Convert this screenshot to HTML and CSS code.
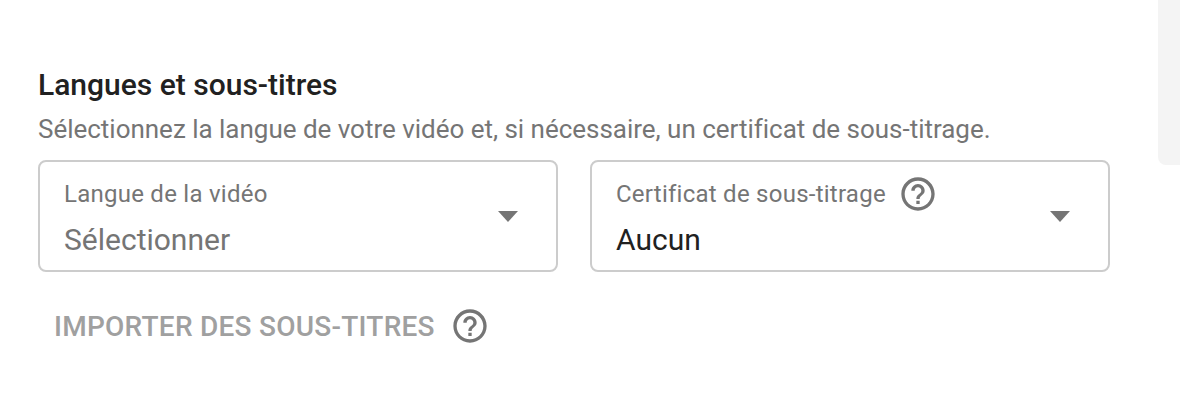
FILE: index.html
```html
<!DOCTYPE html>
<html lang="fr">
<head>
    <meta charset="UTF-8">
    <meta name="viewport" content="width=device-width, initial-scale=1.0">
    <title>Langues et sous-titres</title>
    <link rel="stylesheet" href="styles.css">
</head>
<body>
    <main class="section">
        <h2 class="section-title">Langues et sous-titres</h2>
        <p class="section-desc">Sélectionnez la langue de votre vidéo et, si nécessaire, un certificat de sous-titrage.</p>

        <div class="select-row">
            <div class="select-box">
                <div class="select-text">
                    <div class="select-label">Langue de la vidéo</div>
                    <div class="select-value placeholder">Sélectionner</div>
                </div>
                <span class="select-arrow"></span>
            </div>
            <div class="select-box">
                <div class="select-text">
                    <div class="select-label">
                        Certificat de sous-titrage
                        <svg class="help-icon" viewBox="0 0 24 24"><path d="M11 18h2v-2h-2v2zm1-16C6.48 2 2 6.48 2 12s4.48 10 10 10 10-4.48 10-10S17.52 2 12 2zm0 18c-4.41 0-8-3.59-8-8s3.59-8 8-8 8 3.59 8 8-3.59 8-8 8zm0-14c-2.21 0-4 1.79-4 4h2c0-1.1.9-2 2-2s2 .9 2 2c0 2-3 1.75-3 5h2c0-2.25 3-2.5 3-5 0-2.21-1.79-4-4-4z"/></svg>
                    </div>
                    <div class="select-value">Aucun</div>
                </div>
                <span class="select-arrow"></span>
            </div>
        </div>

        <div class="upload-row">
            <span class="upload-label">IMPORTER DES SOUS-TITRES</span>
            <svg class="help-icon" viewBox="0 0 24 24"><path d="M11 18h2v-2h-2v2zm1-16C6.48 2 2 6.48 2 12s4.48 10 10 10 10-4.48 10-10S17.52 2 12 2zm0 18c-4.41 0-8-3.59-8-8s3.59-8 8-8 8 3.59 8 8-3.59 8-8 8zm0-14c-2.21 0-4 1.79-4 4h2c0-1.1.9-2 2-2s2 .9 2 2c0 2-3 1.75-3 5h2c0-2.25 3-2.5 3-5 0-2.21-1.79-4-4-4z"/></svg>
        </div>
    </main>
    <aside class="side-panel"></aside>
</body>
</html>
```

FILE: styles.css
```css
body {
    margin: 0;
    height: 404px;
    display: flex;
    justify-content: space-between;
    align-items: flex-start;
    background-color: #fff;
    font-family: Roboto, "Liberation Sans", sans-serif;
    overflow: hidden;
}

.section {
    padding: 68px 0 0 38px;
    width: 1072px;
}

.section-title {
    margin: 0;
    font-size: 30px;
    line-height: 34px;
    font-weight: 500;
    color: #212121;
}

.section-desc {
    margin: 11px 0 0;
    font-size: 26px;
    line-height: 32px;
    letter-spacing: -0.02px;
    color: #757575;
}

.select-row {
    display: flex;
    gap: 32px;
    margin-top: 15px;
}

.select-box {
    box-sizing: border-box;
    width: 520px;
    height: 112px;
    padding: 15px 38px 0 24px;
    display: flex;
    justify-content: space-between;
    align-items: center;
    border: 2px solid #ccc;
    border-radius: 8px;
}

.select-text {
    align-self: flex-start;
}

.select-label {
    display: flex;
    align-items: center;
    gap: 12px;
    height: 34px;
    font-size: 24px;
    letter-spacing: 0.25px;
    color: #757575;
}

.select-value {
    margin-top: 9px;
    font-size: 30px;
    line-height: 40px;
    color: #212121;
}

.select-value.placeholder {
    color: #757575;
}

.select-arrow {
    width: 0;
    height: 0;
    margin-bottom: 14px;
    border-left: 10px solid transparent;
    border-right: 10px solid transparent;
    border-top: 11px solid #757575;
}

.help-icon {
    width: 40px;
    height: 40px;
    fill: #757575;
    flex-shrink: 0;
}

.upload-row {
    display: flex;
    align-items: center;
    gap: 15px;
    margin-top: 34px;
    padding-left: 16px;
}

.upload-label {
    font-size: 28px;
    font-weight: 500;
    letter-spacing: 0.25px;
    color: #a0a0a0;
}

.side-panel {
    width: 22px;
    height: 165px;
    background-color: #f4f4f4;
    border-bottom-left-radius: 8px;
}
```
